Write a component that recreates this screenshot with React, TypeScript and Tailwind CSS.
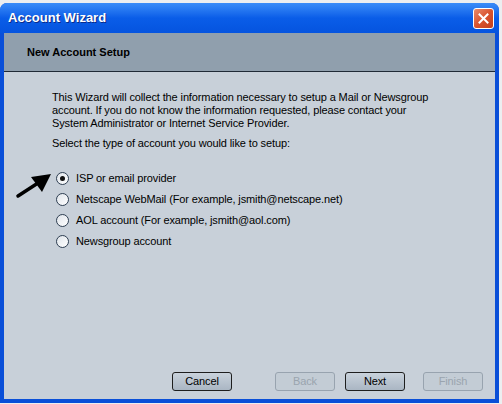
import React from "react";

const options = [
  "ISP or email provider",
  "Netscape WebMail (For example, jsmith@netscape.net)",
  "AOL account (For example, jsmith@aol.com)",
  "Newsgroup account",
];

function Radio({ checked }: { checked: boolean }) {
  return (
    <span className="flex h-[13px] w-[13px] items-center justify-center rounded-full border border-[#2f3f52] bg-gradient-to-br from-[#dfe4ea] to-[#ffffff]">
      {checked && <span className="h-[5px] w-[5px] rounded-full bg-[#111]" />}
    </span>
  );
}

function WizButton({ label, disabled }: { label: string; disabled?: boolean }) {
  return (
    <button
      className={`flex h-[19px] w-[60px] items-center justify-center rounded-[3px] border text-[11px] ${
        disabled
          ? "border-[#98a3af] bg-[#c3ccd5] text-[#9aa4ae]"
          : "border-[#1e1e1e] bg-gradient-to-b from-[#c9d2dc] to-[#aab6c3] text-black"
      }`}
    >
      {label}
    </button>
  );
}

export default function App() {
  const [selected, setSelected] = React.useState(0);
  return (
    <div className="h-[404px] w-[502px] bg-[#eceef0] pt-[3px]" style={{ fontFamily: '"Liberation Sans", Arial, sans-serif' }}>
      <div className="flex h-[400px] w-[499px] flex-col rounded-t-[7px] bg-[#0a4fd8]">
        {/* Title bar */}
        <div className="flex h-[30px] items-center justify-between rounded-t-[7px] bg-gradient-to-b from-[#3a8cf8] via-[#0a5de8] to-[#0554df] pl-[8px] pr-[5px]">
          <span className="text-[13px] font-bold text-white [text-shadow:1px_1px_0_#0b2c8a]">Account Wizard</span>
          <span className="flex h-[21px] w-[21px] items-center justify-center rounded-[3px] border border-white bg-gradient-to-br from-[#e88a6a] via-[#d9532e] to-[#c2401e]">
            <svg width="11" height="11" viewBox="0 0 11 11">
              <path d="M1.5 1.5 L9.5 9.5 M9.5 1.5 L1.5 9.5" stroke="white" strokeWidth="2" strokeLinecap="square" />
            </svg>
          </span>
        </div>

        {/* Client area */}
        <div className="mx-[4px] mb-[4px] flex flex-1 flex-col bg-[#c8d0d9]">
          <div className="flex h-[39px] items-center border-b border-[#1f2a36] bg-[#909fad] pl-[23px]">
            <span className="text-[11px] font-bold text-black">New Account Setup</span>
          </div>

          <div className="flex flex-1 flex-col pl-[48px] pt-[19px] text-[11px] leading-[13px] tracking-[-0.12px] text-black">
            <p className="whitespace-nowrap">
              This Wizard will collect the information necessary to setup a Mail or Newsgroup
              <br />
              account. If you do not know the information requested, please contact your
              <br />
              System Administrator or Internet Service Provider.
            </p>
            <p className="mt-[7px]">Select the type of account you would like to setup:</p>

            <div className="relative mt-[22px] flex flex-col gap-[8px] pl-[4px]">
              {options.map((opt, i) => (
                <label key={opt} className="flex h-[13px] items-center gap-[7px]" onClick={() => setSelected(i)}>
                  <Radio checked={selected === i} />
                  <span>{opt}</span>
                </label>
              ))}
              <svg className="absolute left-[-37px] top-[1px]" width="40" height="26" viewBox="0 0 40 26">
                <path d="M3 23 L23 10" stroke="black" strokeWidth="3.5" strokeLinecap="round" />
                <polygon points="36,1 16,4 27,19" fill="black" />
              </svg>
            </div>

            <div className="flex-1" />

            <div className="mb-[8px] flex items-center pl-[120px]">
              <WizButton label="Cancel" />
              <div className="ml-[43px] flex gap-[10px]">
                <WizButton label="Back" disabled />
                <WizButton label="Next" />
              </div>
              <div className="ml-[18px]">
                <WizButton label="Finish" disabled />
              </div>
            </div>
          </div>
        </div>
      </div>
    </div>
  );
}
